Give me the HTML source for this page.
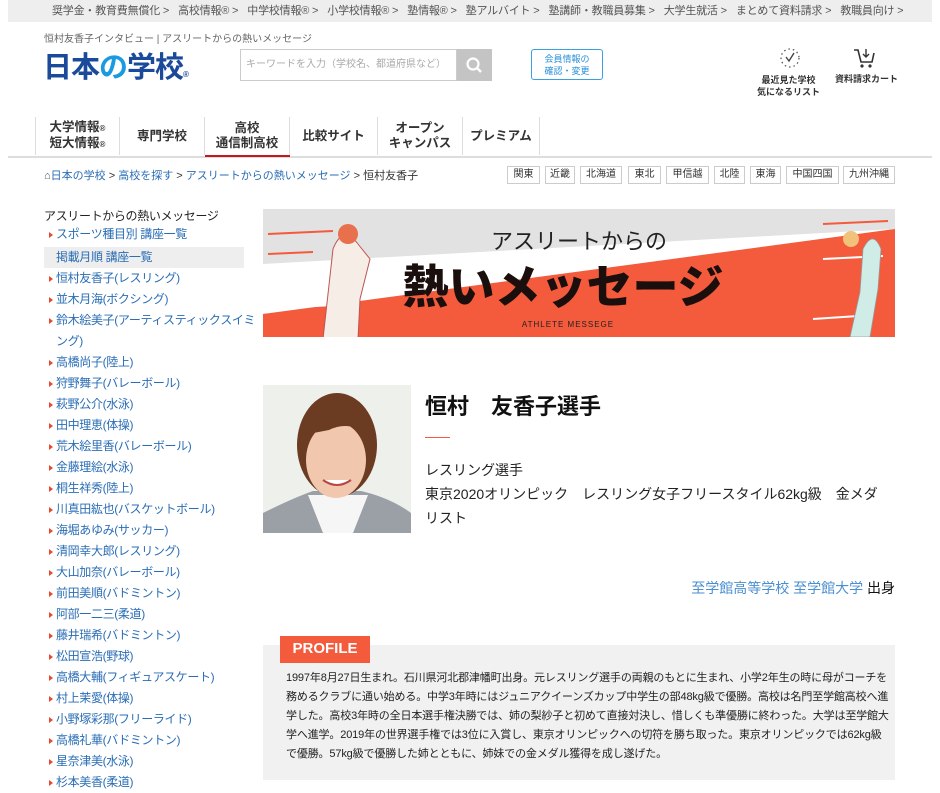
<!DOCTYPE html>
<html><head><meta charset="utf-8"><style>
*{margin:0;padding:0;box-sizing:border-box}
body{width:940px;height:791px;overflow:hidden;background:#fff;font-family:"Liberation Sans","Noto Sans CJK JP",sans-serif;color:#222;position:relative}
.a{position:absolute;white-space:nowrap}
.top{left:8px;top:0;width:924px;height:22px;background:#eeeeee;font-size:11px;color:#555;line-height:22px;padding-left:44px;letter-spacing:-0.2px}
.top span{margin-right:9px}
.nav div{position:absolute;top:117px;height:38px;font-size:12.5px;font-weight:bold;color:#333;text-align:center;line-height:15px;border-right:1px solid #ddd;display:flex;align-items:center;justify-content:center;white-space:nowrap}
.reg{top:166px;height:18px;border:1px solid #ccc;font-size:10px;line-height:16px;text-align:center;color:#333}
.side{left:44px;top:208px;width:212px;font-size:12px;letter-spacing:-0.35px}
.side li{list-style:none;color:#2a6db5;line-height:21px;padding-left:12px;position:relative;white-space:normal}
.side li:before{content:"";position:absolute;left:5px;top:8px;border-left:4px solid #e8482e;border-top:3px solid transparent;border-bottom:3px solid transparent}
</style></head><body>
<div class="a top"><span>奨学金・教育費無償化 &gt;</span><span>高校情報® &gt;</span><span>中学校情報® &gt;</span><span>小学校情報® &gt;</span><span>塾情報® &gt;</span><span>塾アルバイト &gt;</span><span>塾講師・教職員募集 &gt;</span><span>大学生就活 &gt;</span><span>まとめて資料請求 &gt;</span><span>教職員向け &gt;</span></div>
<div class="a" style="left:44px;top:30px;font-size:10px;color:#666">恒村友香子インタビュー | アスリートからの熱いメッセージ</div>
<div class="a" style="left:43px;top:44px;font-size:29px;font-weight:bold;color:#1b4a9a;letter-spacing:-1px">日本<span style="color:#1a9ae0">の</span>学校<span style="font-size:8px">®</span></div>
<div class="a" style="left:240px;top:49px;width:217px;height:32px;border:1px solid #ccc;font-size:10px;color:#aaa;line-height:30px;padding-left:5px;overflow:hidden">キーワードを入力（学校名、都道府県など）</div>
<div class="a" style="left:457px;top:49px;width:35px;height:32px;background:#c4c4c4"><svg width="35" height="32"><circle cx="16" cy="15" r="5.5" fill="none" stroke="#fff" stroke-width="2.2"/><line x1="20" y1="19" x2="24" y2="23" stroke="#fff" stroke-width="2.5"/></svg></div>
<div class="a" style="left:531px;top:49px;width:72px;height:31px;border:1px solid #3aa0e0;border-radius:3px;font-size:9px;color:#2a8fd8;text-align:center;line-height:12px;padding-top:3px">会員情報の<br>確認・変更</div>
<svg class="a" style="left:778px;top:46px" width="24" height="24"><circle cx="12" cy="12" r="9" fill="none" stroke="#555" stroke-width="1.3" stroke-dasharray="1.5 3"/><polyline points="8,11 11,15 16,7" fill="none" stroke="#444" stroke-width="1.4"/></svg>
<div class="a" style="left:757px;top:74px;font-size:9px;font-weight:bold;color:#333;text-align:center;line-height:12px">最近見た学校<br>気になるリスト</div>
<svg class="a" style="left:852px;top:46px" width="24" height="24"><path d="M2 4h4l3 12h11l2-9" fill="none" stroke="#333" stroke-width="1.6"/><circle cx="10" cy="20" r="1.6" fill="#333"/><circle cx="18" cy="20" r="1.6" fill="#333"/><path d="M14 3v8M11 8l3 3 3-3" fill="none" stroke="#333" stroke-width="1.4"/></svg>
<div class="a" style="left:835px;top:72px;font-size:9px;font-weight:bold;color:#333">資料請求カート</div>
<div class="nav">
<div style="left:35px;width:85px;border-left:1px solid #ddd"><span style="display:block;text-align:left">大学情報<span style="font-size:8px">®</span><br>短大情報<span style="font-size:8px">®</span></span></div>
<div style="left:120px;width:85px">専門学校</div>
<div style="left:205px;width:85px"><span style="display:block">高校<br>通信制高校</span></div>
<div style="left:290px;width:88px">比較サイト</div>
<div style="left:378px;width:85px"><span style="display:block">オープン<br>キャンパス</span></div>
<div style="left:463px;width:77px">プレミアム</div>
</div>
<div class="a" style="left:8px;top:156px;width:924px;height:2px;background:#ddd"></div>
<div class="a" style="left:205px;top:155px;width:85px;height:2px;background:#c8161d"></div>
<div class="a" style="left:44px;top:167px;font-size:11px;color:#2a6db5"><span style="color:#555">⌂</span>日本の学校 <span style="color:#333">&gt;</span> 高校を探す <span style="color:#333">&gt;</span> アスリートからの熱いメッセージ <span style="color:#333">&gt; 恒村友香子</span></div>
<div class="a reg" style="left:507px;width:33px">関東</div>
<div class="a reg" style="left:545px;width:30px">近畿</div>
<div class="a reg" style="left:580px;width:42px">北海道</div>
<div class="a reg" style="left:628px;width:33px">東北</div>
<div class="a reg" style="left:666px;width:43px">甲信越</div>
<div class="a reg" style="left:714px;width:31px">北陸</div>
<div class="a reg" style="left:750px;width:31px">東海</div>
<div class="a reg" style="left:786px;width:53px">中国四国</div>
<div class="a reg" style="left:843px;width:52px">九州沖縄</div>

<div class="a side">
<div style="font-size:12px;color:#222;line-height:16px">アスリートからの熱いメッセージ</div>
<ul style="margin-top:0"><li>スポーツ種目別 講座一覧</li></ul>
<div style="background:#eee;color:#2a6db5;line-height:21px;padding-left:12px;margin:2px 0 0;width:200px">掲載月順 講座一覧</div>
<ul>
<li>恒村友香子(レスリング)</li><li>並木月海(ボクシング)</li><li>鈴木絵美子(アーティスティックスイミング)</li><li>高橋尚子(陸上)</li><li>狩野舞子(バレーボール)</li><li>萩野公介(水泳)</li><li>田中理恵(体操)</li><li>荒木絵里香(バレーボール)</li><li>金藤理絵(水泳)</li><li>桐生祥秀(陸上)</li><li>川真田紘也(バスケットボール)</li><li>海堀あゆみ(サッカー)</li><li>清岡幸大郎(レスリング)</li><li>大山加奈(バレーボール)</li><li>前田美順(バドミントン)</li><li>阿部一二三(柔道)</li><li>藤井瑞希(バドミントン)</li><li>松田宣浩(野球)</li><li>高橋大輔(フィギュアスケート)</li><li>村上茉愛(体操)</li><li>小野塚彩那(フリーライド)</li><li>高橋礼華(バドミントン)</li><li>星奈津美(水泳)</li><li>杉本美香(柔道)</li>
</ul></div>

<svg class="a" style="left:263px;top:209px" width="632" height="128">
<rect width="632" height="128" fill="#fff"/>
<polygon points="0,0 632,0 632,20 0,55" fill="#e2e2e2"/>
<polygon points="0,128 632,128 632,20 0,105" fill="#f45a3c"/>
<polygon points="0,128 0,105 300,75 260,128" fill="#f45a3c"/>
<g stroke="#fff" stroke-width="2"><line x1="0" y1="100" x2="70" y2="96"/><line x1="560" y1="50" x2="620" y2="47"/><line x1="550" y1="110" x2="610" y2="106"/></g>
<g stroke="#f45a3c" stroke-width="2"><line x1="5" y1="25" x2="70" y2="22"/><line x1="5" y1="45" x2="50" y2="43"/><line x1="560" y1="15" x2="625" y2="12"/></g>
<path d="M70 40 q10-25 25-5 l12 15 -10 40 -2 40 h-35 l5-45 z" fill="#f6eee6" stroke="#b55" stroke-width="1"/>
<circle cx="85" cy="25" r="10" fill="#e8704c"/>
<path d="M600 40 q10-20 18 0 l-3 40 -8 48 h-20 l10-45z" fill="#cfece6" stroke="#999" stroke-width="0.8"/>
<circle cx="588" cy="30" r="8" fill="#f2c27a"/>
<text x="316" y="40" font-family="Liberation Sans,Noto Sans CJK JP,sans-serif" font-size="22" fill="#222" text-anchor="middle">アスリートからの</text>
<text x="300" y="94" font-family="Liberation Sans,Noto Sans CJK JP,sans-serif" font-size="46" font-weight="900" fill="#1a0f0d" text-anchor="middle">熱いメッセージ</text>
<text x="305" y="118" font-family="Liberation Sans,sans-serif" font-size="8" fill="#222" text-anchor="middle" letter-spacing="1">ATHLETE MESSEGE</text>
</svg>

<svg class="a" style="left:263px;top:385px" width="148" height="148">
<rect width="148" height="148" fill="#eef0ec"/>
<path d="M0 148 v-20 q30-15 50-22 h48 q30 7 50 22 v20z" fill="#9aa0a6"/>
<path d="M45 110 l15 38 h30 l15-38z" fill="#f6f6f6"/>
<ellipse cx="74" cy="60" rx="40" ry="52" fill="#6b3b22"/>
<ellipse cx="73" cy="75" rx="30" ry="38" fill="#f1c7ad"/>
<path d="M40 50 q30-30 66 0 q-20-15-40-5z" fill="#6b3b22"/>
<path d="M60 95 q14 10 28 0" fill="#fff" stroke="#b44" stroke-width="2"/>
</svg>
<div class="a" style="left:425px;top:389px;font-size:22px;font-weight:bold;color:#111">恒村　友香子選手</div>
<div class="a" style="left:425px;top:437px;width:25px;height:1px;background:#f45a3c"></div>
<div class="a" style="left:425px;top:458px;width:458px;white-space:normal;font-size:14px;line-height:24px;color:#222">レスリング選手<br>東京2020オリンピック　レスリング女子フリースタイル62kg級　金メダリスト</div>
<div class="a" style="right:45px;top:578px;font-size:14px;color:#4a8fd0">至学館高等学校 至学館大学 <span style="color:#111">出身</span></div>

<div class="a" style="left:263px;top:645px;width:632px;height:135px;background:#f1f1f1"></div>
<div class="a" style="left:280px;top:636px;width:90px;height:27px;background:#f45a3c;color:#fff;font-weight:bold;font-size:15px;line-height:25px;text-align:center">PROFILE</div>
<div class="a" style="left:286px;top:669px;width:606px;white-space:normal;font-size:11px;letter-spacing:-0.15px;line-height:19px;color:#222">1997年8月27日生まれ。石川県河北郡津幡町出身。元レスリング選手の両親のもとに生まれ、小学2年生の時に母がコーチを務めるクラブに通い始める。中学3年時にはジュニアクイーンズカップ中学生の部48kg級で優勝。高校は名門至学館高校へ進学した。高校3年時の全日本選手権決勝では、姉の梨紗子と初めて直接対決し、惜しくも準優勝に終わった。大学は至学館大学へ進学。2019年の世界選手権では3位に入賞し、東京オリンピックへの切符を勝ち取った。東京オリンピックでは62kg級で優勝。57kg級で優勝した姉とともに、姉妹での金メダル獲得を成し遂げた。</div>
</body></html>
